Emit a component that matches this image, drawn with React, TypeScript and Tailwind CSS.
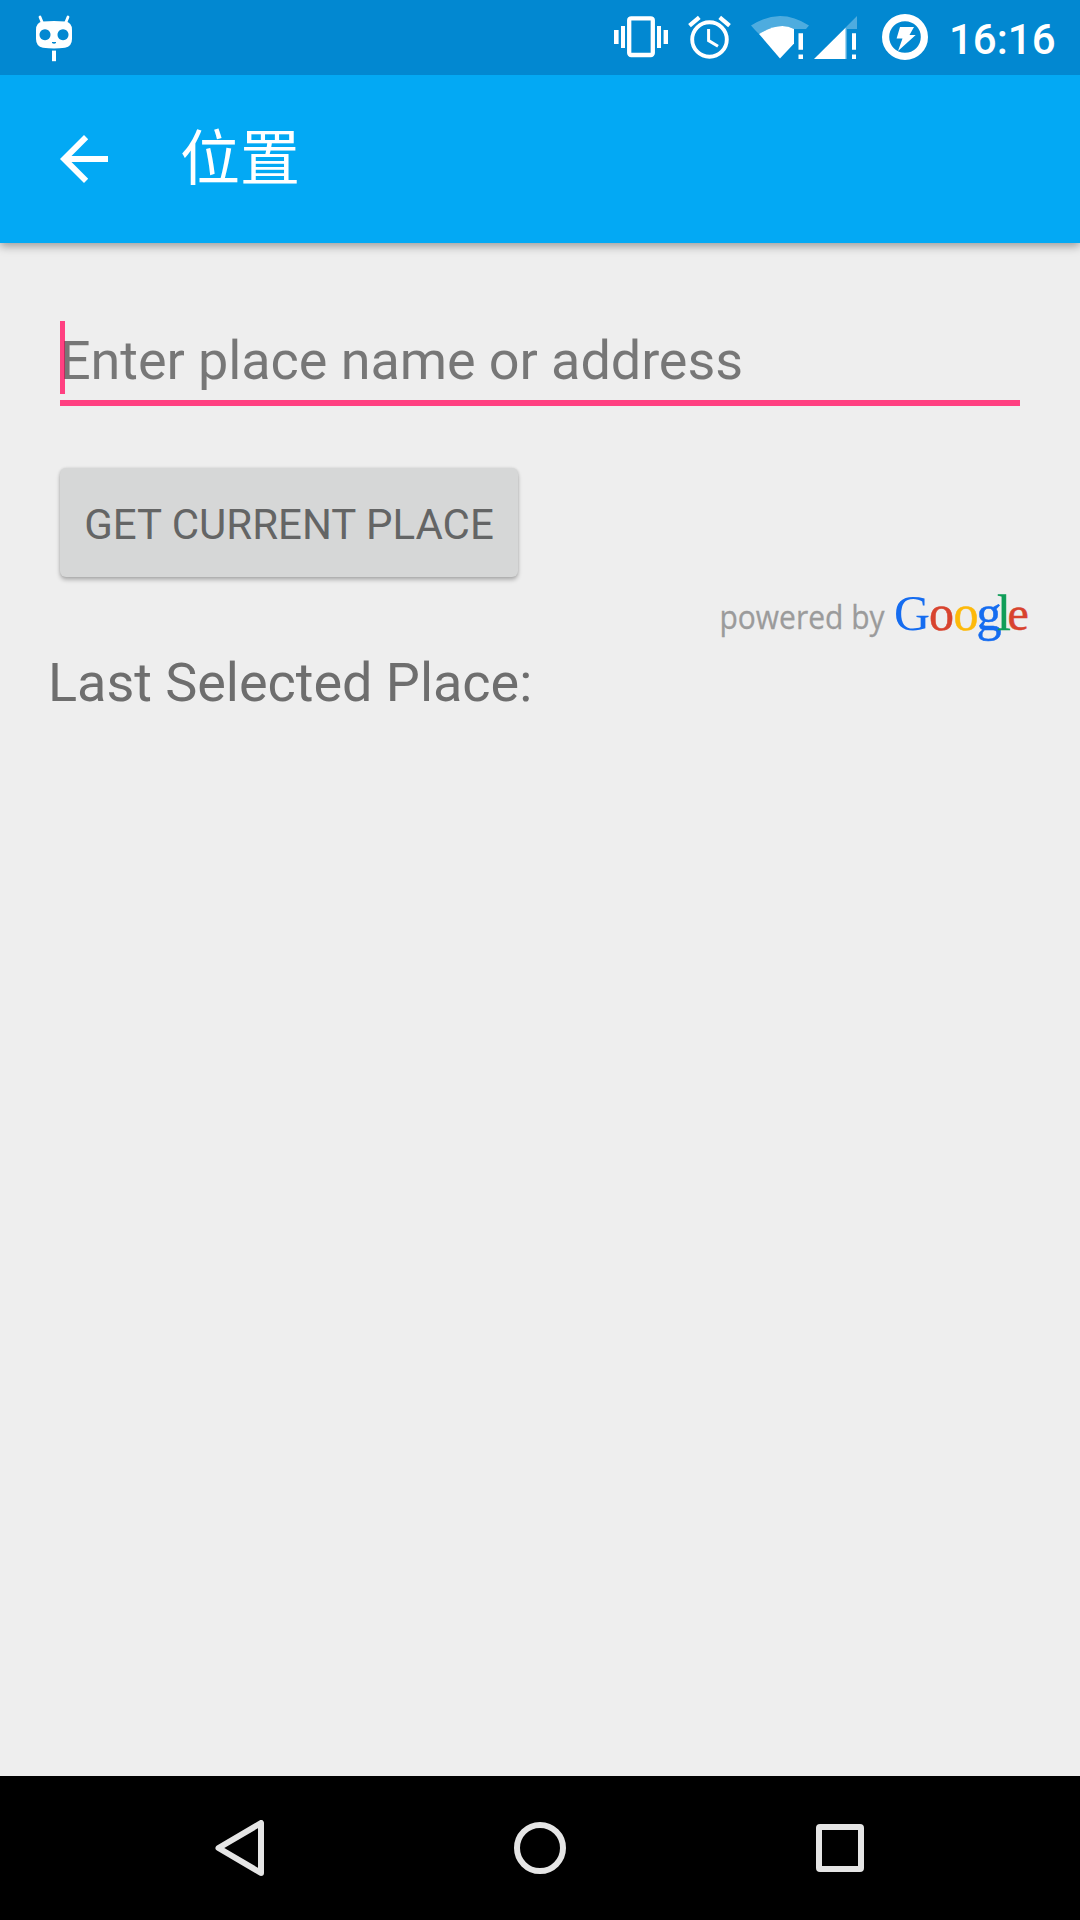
import React from "react";

function RobotIcon() {
  return (
    <svg className="ml-9 h-[75px] w-9" viewBox="36 0 36 75">
      <g fill="none" stroke="#fff" strokeWidth="2.8" strokeLinecap="round">
        <path d="M40 17l2.4 6M68 17l-2.4 6" />
      </g>
      <path
        fill="#fff"
        fillRule="evenodd"
        d="M43 21.6Q54 20.6 65 21.6Q72 22.4 72 30V39Q72 46.4 65 47.8Q54 49.4 43 47.8Q36 46.4 36 39V30Q36 22.4 43 21.6ZM45 29.2a5.5 5.5 0 1 0 .01 0ZM63 29.2a5.5 5.5 0 1 0 .01 0ZM52 42h4v1q-2 1.600-4 0Z"
      />
      <rect x="52" y="50.600" width="4" height="10.6" fill="#fff" />
    </svg>
  );
}

function VibrateIcon() {
  return (
    <svg className="h-[75px] w-[54px]" viewBox="614 0 54 75">
      <rect x="629.2" y="18.3" width="23.6" height="36.700" rx="2" fill="none" stroke="#fff" strokeWidth="4.300" />
      <path fill="#fff" d="M614 30h4.600v14H614ZM621 26h4v22h-4ZM657 26h4v22h-4ZM663.6 30h4.400v14h-4.400Z" />
    </svg>
  );
}

function AlarmIcon() {
  return (
    <svg className="ml-5 h-[75px] w-[43px]" viewBox="688 0 43 75">
      <g fill="none" stroke="#fff">
        <circle cx="709.5" cy="39.5" r="17.3" strokeWidth="3.900" />
        <path d="M689.5 25.6l9.800-8.200M729.5 25.600l-9.800-8.200" strokeWidth="4.200" />
        <path d="M708.6 29V40.600L718 46.300" strokeWidth="3" />
      </g>
    </svg>
  );
}

function WifiIcon() {
  return (
    <svg className="ml-5 h-[75px] w-[58px]" viewBox="751 0 58 75">
      <path fill="#fff" fillOpacity=".3" d="M751 25.500Q780 6.500 809 25.500L806 29H793.500V44L780 58.500Z" />
      <path fill="#0288d1" d="M751 27L759 34Q780 21 794 29V45L780 60H751Z" />
      <path fill="#fff" d="M759 34Q780 21 794 29V43.500L780 58.500Z" />
      <path fill="#fff" d="M798.500 33.300h4.500v16.500h-4.500ZM798.500 54.400h4.500v4.500h-4.500Z" />
    </svg>
  );
}

function SignalIcon() {
  return (
    <svg className="ml-[5px] h-[75px] w-[43px]" viewBox="814 0 43 75">
      <path fill="#fff" fillOpacity=".3" d="M857 16V29H847V59H845V28Z" />
      <path fill="#fff" d="M814 59L845.500 27.700V59Z" />
      <path fill="#fff" d="M852 33.300h4v16.500h-4ZM852 54.400h4v4.500h-4Z" />
    </svg>
  );
}

function BatteryIcon() {
  return (
    <svg className="ml-[25px] h-[75px] w-[46px]" viewBox="882 0 46 75">
      <circle cx="905" cy="37" r="19.400" fill="none" stroke="#fff" strokeWidth="7.200" />
      <path fill="#fff" d="M900 27H914L909.500 35H915.700L898 51L902.500 38.500H896.600Z" />
    </svg>
  );
}

function StatusBar() {
  return (
    <header className="relative z-10 flex h-[75px] items-center bg-[#0288d1] text-white">
      <RobotIcon />
      <div className="ml-auto flex items-center">
        <VibrateIcon />
        <AlarmIcon />
        <WifiIcon />
        <SignalIcon />
        <BatteryIcon />
        <span className="ml-[21px] w-[131px] pt-[5px] text-[42px] leading-[48px] font-medium">16:16</span>
      </div>
    </header>
  );
}

function Toolbar() {
  return (
    <div className="relative flex h-[168px] items-center bg-[#03a9f4] pl-[60px] text-white shadow-[0_3px_9px_rgba(0,0,0,0.36)]">
      <svg className="h-12 w-12" viewBox="0 0 48 48">
        <path d="M48 21V27H11.500L28.200 43.800L24 48L0 24L24 0L28.200 4.200L11.500 21Z" fill="#fff" />
      </svg>
      <h1 className="mb-[10px] ml-[72px] font-['Noto_Sans_CJK_SC',sans-serif] text-[60px] leading-[84px] font-normal">位置</h1>
    </div>
  );
}

function Attribution() {
  return (
    <svg className="h-[60px] w-[310px] overflow-visible" viewBox="720 590 310 60">
      <text
        x="719.500"
        y="629"
        fontSize="32"
        fill="#9b9b9b"
        stroke="#9b9b9b"
        strokeWidth=".3"
        textLength="165"
        lengthAdjust="spacingAndGlyphs"
        className="font-['Open_Sans',sans-serif]"
      >
        powered by
      </text>
      <text y="630" fontSize="50" className="font-['Liberation_Serif',serif]">
        <tspan x="894" fill="#156cf0">G</tspan>
        <tspan x="929" fill="#d8432e" stroke="#d8432e" strokeWidth=".5">o</tspan>
        <tspan x="953.500" fill="#fdb90a" stroke="#fdb90a" strokeWidth=".5">o</tspan>
        <tspan x="976.500" fill="#156cf0" stroke="#156cf0" strokeWidth=".5">g</tspan>
        <tspan x="997" fill="#0f9d58" stroke="#0f9d58" strokeWidth=".5">l</tspan>
        <tspan x="1007.500" fill="#d8432e" stroke="#d8432e" strokeWidth=".5" fontSize="48">e</tspan>
      </text>
    </svg>
  );
}

function NavigationBar() {
  return (
    <nav className="flex h-36 items-center bg-black">
      <svg className="ml-[215px] h-14 w-[49px]" viewBox="0 0 49 56" fill="none" stroke="#e5e5e5" strokeWidth="6" strokeLinejoin="round">
        <path d="M46 3V53L3.500 28Z" />
      </svg>
      <div className="ml-[250px] h-[52px] w-[52px] rounded-full border-6 border-[#e5e5e5]" />
      <div className="ml-[250px] h-12 w-12 rounded-[4px] border-6 border-[#e5e5e5]" />
    </nav>
  );
}

export default function App() {
  return (
    <div className="flex h-[1920px] w-[1080px] flex-col overflow-hidden bg-[#eeeeee] font-['Roboto',sans-serif]">
      <StatusBar />
      <Toolbar />
      <main className="flex flex-1 flex-col items-start">
        <div className="relative mt-[78px] ml-[60px] h-[85px] w-[960px] border-b-6 border-[#ff4081]">
          <div className="absolute top-0 left-0 h-[73px] w-[5px] bg-[#ff4081]" />
          <div className="relative pt-[8px] text-[54px] leading-[64px] tracking-[-0.08px] whitespace-nowrap text-black/50">
            Enter place name or address
          </div>
        </div>
        <button className="mt-[62px] ml-[60px] flex h-[109px] w-[458px] items-center justify-center rounded-[6px] bg-[#d6d7d7] pt-[5px] text-[42px] leading-[50px] whitespace-nowrap text-[#646565] shadow-[0_3px_4px_rgba(0,0,0,0.25),0_0_3px_rgba(0,0,0,0.12)]">
          GET CURRENT PLACE
        </button>
        <div className="mt-[13px] mr-[50px] self-end">
          <Attribution />
        </div>
        <p className="mt-px ml-12 text-[54px] leading-[64px] tracking-[-0.03px] text-[#6e6e6e]">Last Selected Place:</p>
      </main>
      <NavigationBar />
    </div>
  );
}
